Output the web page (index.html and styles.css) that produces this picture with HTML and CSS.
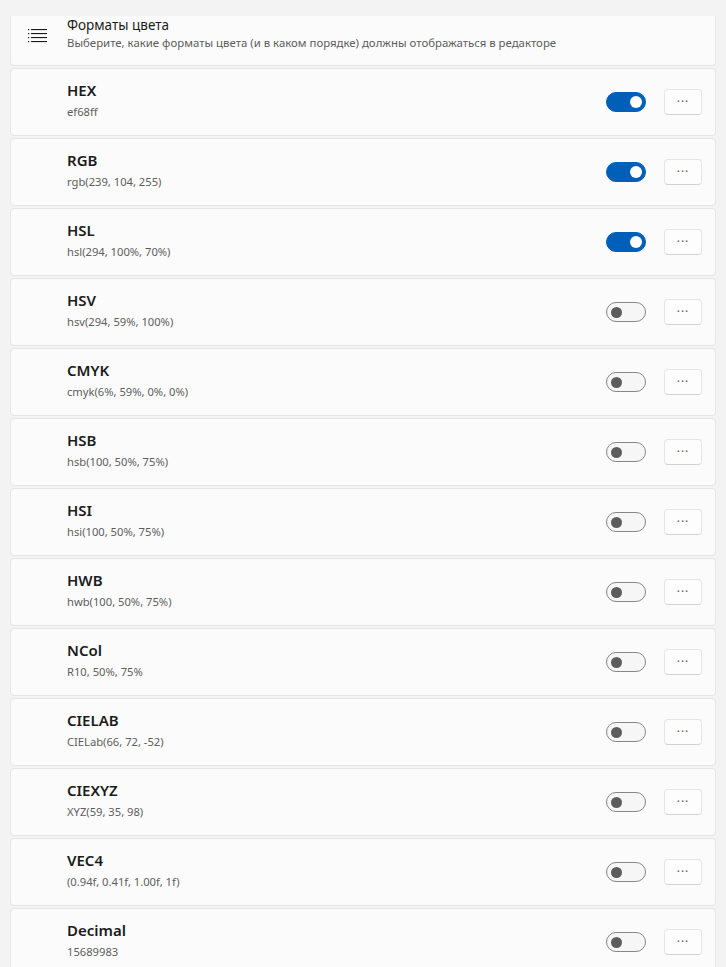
FILE: index.html
```html
<!DOCTYPE html>
<html lang="ru">
<head>
<meta charset="utf-8">
<title>Форматы цвета</title>
<link rel="stylesheet" href="styles.css">
</head>
<body>
<div class="page">
  <div class="card header">
    <div class="icon">
      <svg width="20" height="14" viewBox="0 0 20 14">
        <g fill="#1a1a1a">
          <rect x="0" y="0" width="1.2" height="1.2"/>
          <rect x="0" y="4" width="1.2" height="1.2"/>
          <rect x="0" y="8" width="1.2" height="1.2"/>
          <rect x="0" y="12" width="1.2" height="1.2"/>
          <rect x="3" y="0" width="16" height="1.1"/>
          <rect x="3" y="4" width="16" height="1.1"/>
          <rect x="3" y="8" width="16" height="1.1"/>
          <rect x="3" y="12" width="16" height="1.1"/>
        </g>
      </svg>
    </div>
    <div class="text">
      <div class="h-title">Форматы цвета</div>
      <div class="h-sub">Выберите, какие форматы цвета (и в каком порядке) должны отображаться в редакторе</div>
    </div>
  </div>

  <div class="card row"><div class="text"><div class="title">HEX</div><div class="sub">ef68ff</div></div><div class="toggle on"></div><button class="more">···</button></div>
  <div class="card row"><div class="text"><div class="title">RGB</div><div class="sub">rgb(239, 104, 255)</div></div><div class="toggle on"></div><button class="more">···</button></div>
  <div class="card row"><div class="text"><div class="title">HSL</div><div class="sub">hsl(294, 100%, 70%)</div></div><div class="toggle on"></div><button class="more">···</button></div>
  <div class="card row"><div class="text"><div class="title">HSV</div><div class="sub">hsv(294, 59%, 100%)</div></div><div class="toggle"></div><button class="more">···</button></div>
  <div class="card row"><div class="text"><div class="title">CMYK</div><div class="sub">cmyk(6%, 59%, 0%, 0%)</div></div><div class="toggle"></div><button class="more">···</button></div>
  <div class="card row"><div class="text"><div class="title">HSB</div><div class="sub">hsb(100, 50%, 75%)</div></div><div class="toggle"></div><button class="more">···</button></div>
  <div class="card row"><div class="text"><div class="title">HSI</div><div class="sub">hsi(100, 50%, 75%)</div></div><div class="toggle"></div><button class="more">···</button></div>
  <div class="card row"><div class="text"><div class="title">HWB</div><div class="sub">hwb(100, 50%, 75%)</div></div><div class="toggle"></div><button class="more">···</button></div>
  <div class="card row"><div class="text"><div class="title">NCol</div><div class="sub">R10, 50%, 75%</div></div><div class="toggle"></div><button class="more">···</button></div>
  <div class="card row"><div class="text"><div class="title">CIELAB</div><div class="sub">CIELab(66, 72, -52)</div></div><div class="toggle"></div><button class="more">···</button></div>
  <div class="card row"><div class="text"><div class="title">CIEXYZ</div><div class="sub">XYZ(59, 35, 98)</div></div><div class="toggle"></div><button class="more">···</button></div>
  <div class="card row"><div class="text"><div class="title">VEC4</div><div class="sub">(0.94f, 0.41f, 1.00f, 1f)</div></div><div class="toggle"></div><button class="more">···</button></div>
  <div class="card row"><div class="text"><div class="title">Decimal</div><div class="sub">15689983</div></div><div class="toggle"></div><button class="more">···</button></div>
</div>
</body>
</html>
```
FILE: styles.css
```css
html, body {
  margin: 0;
  padding: 0;
  background: #f3f3f3;
  font-family: "Noto Sans", "Open Sans", sans-serif;
  color: #1b1b1b;
  overflow: hidden;
}
.page {
  padding: 16px 10px 0 10px;
  display: flex;
  flex-direction: column;
  gap: 2px;
  height: 951px;
  overflow: hidden;
}
.card {
  background: #fbfbfb;
  border: 1px solid #e5e5e5;
  border-radius: 4px;
  box-sizing: border-box;
  flex-shrink: 0;
  display: flex;
  align-items: center;
}
.header {
  height: 50px;
  border-top: none;
  border-top-left-radius: 0;
  border-top-right-radius: 0;
  align-items: flex-start;
}
.header .icon {
  width: 56px;
  padding: 10px 0 0 17px;
  box-sizing: border-box;
}
.header .text {
  padding-top: 0;
}
.h-title {
  font-size: 13.5px;
  line-height: 18px;
  color: #1b1b1b;
}
.h-sub {
  font-size: 11.4px;
  line-height: 17px;
  color: #5d5d5d;
}
.row {
  height: 68px;
  padding-left: 56px;
  padding-right: 13px;
}
.row .text {
  flex: 1;
  display: flex;
  flex-direction: column;
  gap: 4px;
  margin-top: -4px;
}
.title {
  font-size: 15px;
  font-weight: 600;
  line-height: 19px;
  color: #1b1b1b;
}
.sub {
  font-size: 11.2px;
  line-height: 16px;
  color: #5d5d5d;
}
.toggle {
  width: 40px;
  height: 20px;
  border-radius: 10px;
  box-sizing: border-box;
  border: 1px solid #878787;
  background: #f6f6f6;
  position: relative;
  margin-right: 18px;
}
.toggle::after {
  content: "";
  position: absolute;
  top: 3.5px;
  left: 3.5px;
  width: 11px;
  height: 11px;
  border-radius: 50%;
  background: #5c5c5c;
}
.toggle.on {
  background: #005fb8;
  border-color: #005fb8;
}
.toggle.on::after {
  left: auto;
  right: 3px;
  top: 3px;
  background: #ffffff;
  width: 12px;
  height: 12px;
}
.more {
  width: 38px;
  height: 26px;
  box-sizing: border-box;
  border: 1px solid #e5e5e5;
  border-bottom-color: #d2d2d2;
  border-radius: 4px;
  background: #fdfdfd;
  color: #5d5d5d;
  font-family: "Noto Sans", sans-serif;
  font-size: 12px;
  line-height: 22px;
  padding: 0;
  letter-spacing: 1px;
}
```
